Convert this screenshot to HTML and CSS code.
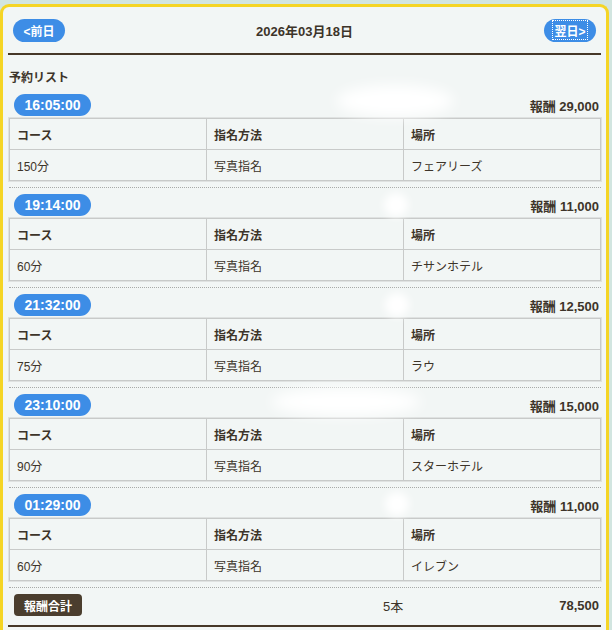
FILE: index.html
```html
<!DOCTYPE html>
<html lang="ja">
<head>
    <meta charset="UTF-8">
    <meta name="viewport" content="width=device-width, initial-scale=1.0">
    <title>予約リスト</title>
    <link rel="stylesheet" href="styles.css">
</head>
<body>
    <div class="page">
        <div class="day-nav">
            <a class="nav-btn">&lt;前日</a>
            <span class="day-title">2026年03月18日</span>
            <a class="nav-btn"><span class="focused">翌日&gt;</span></a>
        </div>

        <h3 class="list-title">予約リスト</h3>

        <div class="entry">
            <div class="entry-head">
                <span class="time">16:05:00</span>
                <span class="reward">報酬 29,000</span>
                <span class="blur wide" style="left: 327px; top: -9px; width: 118px; height: 32px;"></span>
            </div>
            <table class="detail">
                <tr><th>コース</th><th>指名方法</th><th>場所</th></tr>
                <tr><td>150分</td><td>写真指名</td><td>フェアリーズ</td></tr>
            </table>
        </div>

        <div class="entry">
            <div class="entry-head">
                <span class="time">19:14:00</span>
                <span class="reward">報酬 11,000</span>
                <span class="blur" style="left: 375px; top: -1px; width: 24px; height: 24px;"></span>
            </div>
            <table class="detail">
                <tr><th>コース</th><th>指名方法</th><th>場所</th></tr>
                <tr><td>60分</td><td>写真指名</td><td>チサンホテル</td></tr>
            </table>
        </div>

        <div class="entry">
            <div class="entry-head">
                <span class="time">21:32:00</span>
                <span class="reward">報酬 12,500</span>
                <span class="blur" style="left: 376px; top: -1px; width: 24px; height: 24px;"></span>
            </div>
            <table class="detail">
                <tr><th>コース</th><th>指名方法</th><th>場所</th></tr>
                <tr><td>75分</td><td>写真指名</td><td>ラウ</td></tr>
            </table>
        </div>

        <div class="entry">
            <div class="entry-head">
                <span class="time">23:10:00</span>
                <span class="reward">報酬 15,000</span>
                <span class="blur wide" style="left: 262px; top: -6px; width: 150px; height: 28px;"></span>
            </div>
            <table class="detail">
                <tr><th>コース</th><th>指名方法</th><th>場所</th></tr>
                <tr><td>90分</td><td>写真指名</td><td>スターホテル</td></tr>
            </table>
        </div>

        <div class="entry">
            <div class="entry-head">
                <span class="time">01:29:00</span>
                <span class="reward">報酬 11,000</span>
                <span class="blur" style="left: 376px; top: -2px; width: 24px; height: 24px;"></span>
            </div>
            <table class="detail">
                <tr><th>コース</th><th>指名方法</th><th>場所</th></tr>
                <tr><td>60分</td><td>写真指名</td><td>イレブン</td></tr>
            </table>
        </div>

        <div class="total">
            <span class="total-label">報酬合計</span>
            <span class="total-count">5本</span>
            <span class="total-sum">78,500</span>
        </div>
    </div>
</body>
</html>
```

FILE: styles.css
```css
body {
    margin: 0;
    background-color: #d2e5e0;
    font-family: "Liberation Sans", "Noto Sans CJK JP", sans-serif;
    color: #3d3429;
    font-size: 12px;
}
.page {
    margin: 4px 3px 0 0;
    border: 3px solid #f5d525;
    border-bottom: none;
    border-radius: 9px 9px 0 0;
    background-color: #f2f6f5;
    padding: 0 5px 12px 6px;
}
.day-nav {
    display: flex;
    justify-content: space-between;
    align-items: center;
    height: 46px;
    padding: 0 5px;
    margin-left: -1px;
    border-bottom: 2px solid #463828;
}
.nav-btn {
    display: flex;
    align-items: center;
    justify-content: center;
    width: 52px;
    height: 23px;
    border-radius: 12px;
    background-color: #3d8de6;
    color: #fff;
    font-weight: bold;
    font-size: 12px;
}
.focused {
    outline: 1px dotted #fff;
    padding: 1px 1px 0;
}
.day-title {
    font-weight: bold;
    font-size: 13px;
}
.list-title {
    margin: 14px 0 7px;
    font-size: 12px;
    line-height: 18px;
}
.entry {
    padding-bottom: 6px;
    margin-bottom: 6px;
    border-bottom: 1px dotted #a8aaa8;
}
.entry-head {
    position: relative;
    display: flex;
    justify-content: space-between;
    align-items: center;
    height: 22px;
    margin-bottom: 2px;
    padding-left: 5px;
}
.time {
    display: flex;
    align-items: center;
    justify-content: center;
    width: 77px;
    height: 22px;
    border-radius: 11px;
    background-color: #3d8de6;
    color: #fff;
    font-weight: bold;
    font-size: 14px;
}
.reward {
    font-weight: bold;
    font-size: 13px;
    padding-right: 2px;
}
.blur {
    position: absolute;
    border-radius: 50%;
    background-color: #fff;
    filter: blur(4px);
}
.blur.wide {
    filter: blur(7px);
}
.detail {
    width: 100%;
    border-collapse: collapse;
    table-layout: fixed;
    box-shadow: 0 0 0 1px #dfe2e1;
}
.detail th,
.detail td {
    border: 1px solid #c8cac9;
    height: 30px;
    padding: 0 7px;
    text-align: left;
    font-size: 12px;
}
.detail th {
    font-weight: bold;
}
.detail td {
    font-weight: normal;
}
.total {
    position: relative;
    display: flex;
    align-items: center;
    justify-content: space-between;
    height: 22px;
    padding: 0 2px 0 5px;
    margin-bottom: 9px;
}
.total-label {
    display: flex;
    align-items: center;
    justify-content: center;
    width: 68px;
    height: 22px;
    border-radius: 4px;
    background-color: #4b3e2e;
    color: #fff;
    font-weight: bold;
    font-size: 12px;
}
.total-count {
    position: absolute;
    left: 374px;
    font-size: 13px;
}
.total-sum {
    font-weight: bold;
    font-size: 13px;
}
.page::after {
    content: "";
    display: block;
    margin-left: -1px;
    border-top: 2px solid #463828;
}
```
